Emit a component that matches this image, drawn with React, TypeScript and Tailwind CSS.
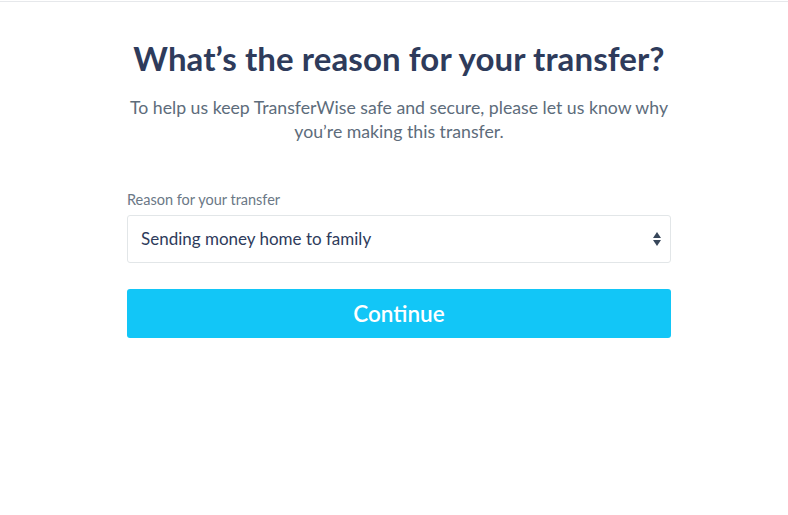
import React, { useState } from 'react';

export default function App() {
  const [reason, setReason] = useState('family');

  return (
    <div className="min-h-[515px] bg-white border-t border-[#e6e8eb] mt-px" style={{ fontFamily: 'Lato, "Open Sans", sans-serif' }}>
      <div className="flex justify-center pl-[10px] pt-[36px]">
        <div className="w-[544px] flex flex-col">
          <h1 className="text-center text-[33px] leading-[40px] font-bold text-[#2e3b5b] tracking-[0.1px] whitespace-nowrap">
            What’s the reason for your transfer?
          </h1>
          <p className="mt-[18px] text-center text-[17.7px] leading-[24px] text-[#5d6c7b] -mx-2">
            To help us keep TransferWise safe and secure, please let us know why you’re making this transfer.
          </p>

          <label className="mt-[47px] text-[14.5px] leading-[18px] text-[#6b7886]">Reason for your transfer</label>
          <div className="relative mt-[6px]">
            <select
              value={reason}
              onChange={(e) => setReason(e.target.value)}
              className="appearance-none w-full h-[48px] rounded-[3px] border border-[#e2e6e8] bg-white pl-[13px] pr-10 text-[17px] text-[#2e3b5b] outline-none"
            >
              <option value="family">Sending money home to family</option>
              <option value="bills">Paying bills</option>
              <option value="savings">Sending money to my own account</option>
            </select>
            <svg className="pointer-events-none absolute right-[9px] top-[16px]" width="10" height="16" viewBox="0 0 10 16">
              <path d="M5 1 L9 7 L1 7 Z" fill="#37475a" />
              <path d="M1 9 L9 9 L5 15 Z" fill="#37475a" />
            </svg>
          </div>

          <button className="mt-[26px] h-[49px] rounded-[3px] bg-[#12c6f7] text-white text-[22.5px] font-semibold">
            Continue
          </button>
        </div>
      </div>
    </div>
  );
}
